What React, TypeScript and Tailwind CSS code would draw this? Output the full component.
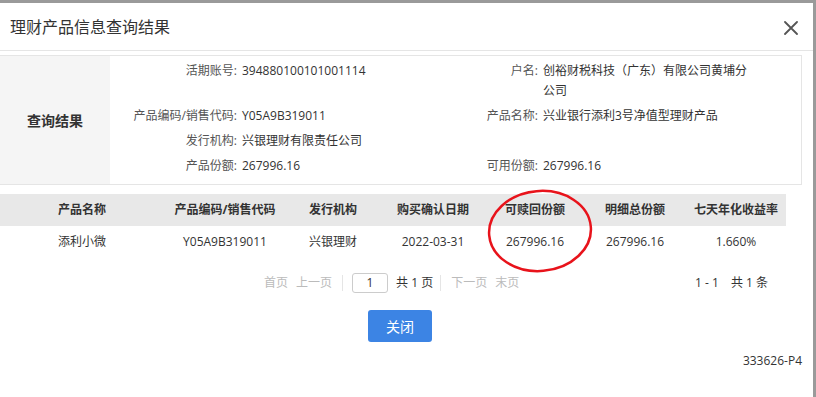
const font = { fontFamily: '"Open Sans", "Noto Sans CJK SC", sans-serif' }

const cols = 'grid grid-cols-[164px_122px_94px_106px_98px_102px_100px]'

const heads = ['产品名称', '产品编码/销售代码', '发行机构', '购买确认日期', '可赎回份额', '明细总份额', '七天年化收益率']
const row = ['添利小微', 'Y05A9B319011', '兴银理财', '2022-03-31', '267996.16', '267996.16', '1.660%']

const App = () => {
  return (
    <div className="w-[816px] h-[397px] bg-[#9a9a9a] pt-[3px] overflow-hidden" style={font}>
      <div className="relative w-[813px] h-[394px] bg-white text-[#333]">
        {/* title bar */}
        <div className="h-[48px] flex items-center justify-between pl-[10px] pr-[15px] border-b border-[#e5e5e5]">
          <h1 className="text-[16px] leading-[20px] text-[#333]">理财产品信息查询结果</h1>
          <svg width="14" height="14" viewBox="0 0 14 14" className="mt-[2px]">
            <path d="M1 1 L13 13 M13 1 L1 13" stroke="#555" strokeWidth="1.8" strokeLinecap="round" />
          </svg>
        </div>

        {/* info box */}
        <div className="mt-[4px] w-[802px] flex border border-l-0 border-[#e5e5e5]">
          <div className="w-[110px] bg-[#f5f5f5] flex items-center justify-center text-[14px] font-bold text-[#333]">
            查询结果
          </div>
          <div className="grid grid-cols-[132px_176px_125px_210px] gap-y-[5px] pt-[5px] pb-[8px] text-[12px] leading-[20px]">
            <div className="text-right pr-[5px] text-[#555]">活期账号:</div>
            <div>394880100101001114</div>
            <div className="text-right pr-[5px] text-[#555]">户名:</div>
            <div>创裕财税科技（广东）有限公司黄埔分公司</div>

            <div className="text-right pr-[5px] text-[#555]">产品编码/销售代码:</div>
            <div>Y05A9B319011</div>
            <div className="text-right pr-[5px] text-[#555]">产品名称:</div>
            <div>兴业银行添利3号净值型理财产品</div>

            <div className="text-right pr-[5px] text-[#555]">发行机构:</div>
            <div>兴银理财有限责任公司</div>
            <div></div>
            <div></div>

            <div className="text-right pr-[5px] text-[#555]">产品份额:</div>
            <div>267996.16</div>
            <div className="text-right pr-[5px] text-[#555]">可用份额:</div>
            <div>267996.16</div>
          </div>
        </div>

        {/* result table */}
        <div className="mt-[9px] w-[786px]">
          <div className={`${cols} h-[32px] items-center bg-[#e8e8e8] text-[12px] font-bold text-[#333]`}>
            {heads.map((h) => (
              <div key={h} className="text-center">{h}</div>
            ))}
          </div>
          <div className={`${cols} h-[32px] items-center text-[12px] text-[#333]`}>
            {row.map((c, i) => (
              <div key={i} className="text-center">{c}</div>
            ))}
          </div>

          {/* pager */}
          <div className="mt-[14px] h-[22px] flex items-center text-[12px] leading-[20px]">
            <div className="ml-[264px] flex items-center">
              <span className="text-[#bbb]">首页</span>
              <span className="ml-[8px] text-[#bbb]">上一页</span>
              <span className="ml-[10px] w-px h-[16px] bg-[#e5e5e5]"></span>
              <span className="ml-[9px] w-[36px] h-[20px] border border-[#ccc] rounded-[3px] flex items-center justify-center text-[#333]">1</span>
              <span className="ml-[8px] text-[#333] whitespace-pre">共 1 页</span>
              <span className="ml-[7px] w-px h-[16px] bg-[#e5e5e5]"></span>
              <span className="ml-[10px] text-[#bbb]">下一页</span>
              <span className="ml-[8px] text-[#bbb]">末页</span>
            </div>
            <div className="ml-auto mr-[18px] flex gap-[12px] text-[#333]">
              <span className="whitespace-pre">1 - 1</span>
              <span className="whitespace-pre">共 1 条</span>
            </div>
          </div>
        </div>

        {/* close button */}
        <div className="mt-[16px] w-[800px] flex justify-center">
          <button className="w-[64px] h-[32px] rounded-[3px] bg-[#3c84e4] text-white text-[14px]">关闭</button>
        </div>

        <div className="mt-[9px] pr-[11px] text-right text-[12px] leading-[20px] text-[#333]">333626-P4</div>

        {/* red annotation ring */}
        <svg className="absolute left-[484px] top-[183px] pointer-events-none" width="112" height="90" viewBox="0 0 112 90">
          <ellipse cx="56" cy="45" rx="51" ry="40" fill="none" stroke="#e8131b" strokeWidth="2.5" transform="rotate(-5 56 45)" />
        </svg>
      </div>
    </div>
  )
}

export default App
